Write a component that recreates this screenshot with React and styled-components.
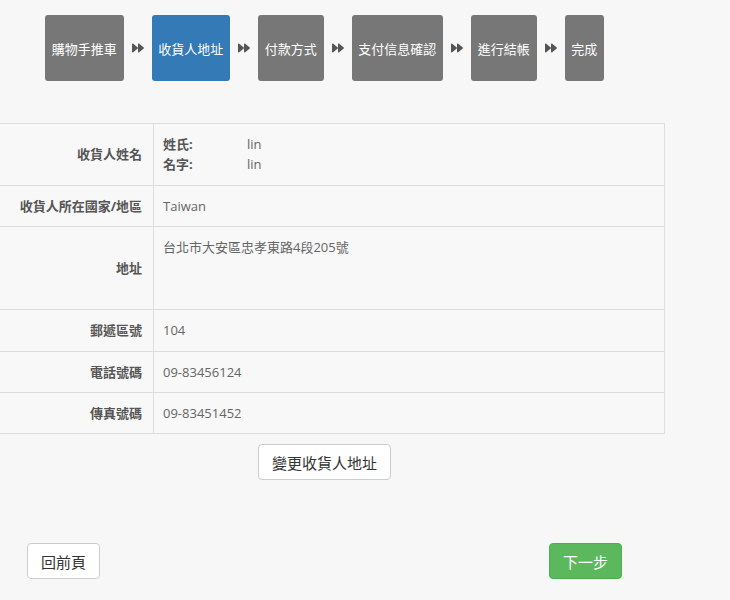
import React from "react";
import styled, { createGlobalStyle } from "styled-components";
import { FaForward } from "react-icons/fa";

const steps = [
    { label: "購物手推車" },
    { label: "收貨人地址", active: true },
    { label: "付款方式" },
    { label: "支付信息確認" },
    { label: "進行結帳" },
    { label: "完成" },
];

const rows = [
    { label: "收貨人姓名", kind: "name" },
    { label: "收貨人所在國家/地區", value: "Taiwan" },
    { label: "地址", value: "台北市大安區忠孝東路4段205號", kind: "address" },
    { label: "郵遞區號", value: "104" },
    { label: "電話號碼", value: "09-83456124" },
    { label: "傳真號碼", value: "09-83451452" },
];

export default function App() {
    return (
        <PAGE>
            <GlobalStyle />
            <STEPS>
                {steps.map((s, i) => (
                    <React.Fragment key={s.label}>
                        {i > 0 && <ARROW><FaForward /></ARROW>}
                        <STEP $active={s.active}>{s.label}</STEP>
                    </React.Fragment>
                ))}
            </STEPS>

            <SHEET>
                <TABLE>
                    {rows.map((row) => (
                        <ROW key={row.label}>
                            <LABEL>{row.label}</LABEL>
                            <VALUE $tall={row.kind === "address"}>
                                {row.kind === "name" ? (
                                    <NAMEGRID>
                                        <span>姓氏:</span><span>lin</span>
                                        <span>名字:</span><span>lin</span>
                                    </NAMEGRID>
                                ) : (
                                    row.value
                                )}
                            </VALUE>
                        </ROW>
                    ))}
                </TABLE>
                <CENTER>
                    <BUTTON>變更收貨人地址</BUTTON>
                </CENTER>
            </SHEET>

            <FOOTER>
                <BUTTON>回前頁</BUTTON>
                <BUTTON $primary>下一步</BUTTON>
            </FOOTER>
        </PAGE>
    );
}

const GlobalStyle = createGlobalStyle`
    body {
        margin : 0;
        background : #f7f7f7;
        font-family : "Open Sans", "Noto Sans CJK TC", sans-serif;
        font-size : 13px;
        color : #555;
        overflow : hidden;
    }
`;

const PAGE = styled.div`
    width : 730px;
    height : 600px;
    background : #f7f7f7;
`;

const STEPS = styled.div`
    display : flex;
    align-items : center;
    gap : 8px;
    padding : 15px 0 0 45px;
`;

const STEP = styled.div`
    height : 66px;
    padding : 0 6.75px;
    display : flex;
    align-items : center;
    border-radius : 3px;
    color : #fff;
    font-size : 13px;
    background : ${(p) => (p.$active ? "#337ab7" : "#777")};
`;

const ARROW = styled.span`
    display : flex;
    color : #555;
    font-size : 12px;
`;

const SHEET = styled.div`
    margin : 42px 0 0 -16px;
    width : 681px;
`;

const TABLE = styled.div`
    border-top : 1px solid #ddd;
    border-right : 1px solid #ddd;
    background : #f8f8f8;
`;

const ROW = styled.div`
    display : grid;
    grid-template-columns : 170px 1fr;
    border-bottom : 1px solid #ddd;
`;

const LABEL = styled.div`
    display : flex;
    align-items : center;
    justify-content : flex-end;
    padding : 10px 11px 10px 0;
    font-weight : bold;
    color : #555;
    border-right : 1px solid #ddd;
    line-height : 20.4px;
`;

const VALUE = styled.div`
    padding : 10px 9px;
    line-height : 20.4px;
    color : #666;
    min-height : ${(p) => (p.$tall ? "62px" : "20px")};
`;

const NAMEGRID = styled.div`
    display : grid;
    grid-template-columns : 84px auto;
    span:nth-child(odd) {
        color : #555;
        font-weight : bold;
    }
`;

const CENTER = styled.div`
    display : flex;
    justify-content : center;
    padding-top : 10px;
`;

const BUTTON = styled.button`
    height : 36px;
    padding : 0 13px;
    font-family : "Open Sans", "Noto Sans CJK TC", sans-serif;
    font-size : 15px;
    border-radius : 4px;
    cursor : pointer;
    border : 1px solid ${(p) => (p.$primary ? "#4cae4c" : "#ccc")};
    background : ${(p) => (p.$primary ? "#5cb85c" : "#fff")};
    color : ${(p) => (p.$primary ? "#fff" : "#333")};
`;

const FOOTER = styled.div`
    display : flex;
    justify-content : space-between;
    width : 595px;
    margin : 63px 0 0 27px;
`;
